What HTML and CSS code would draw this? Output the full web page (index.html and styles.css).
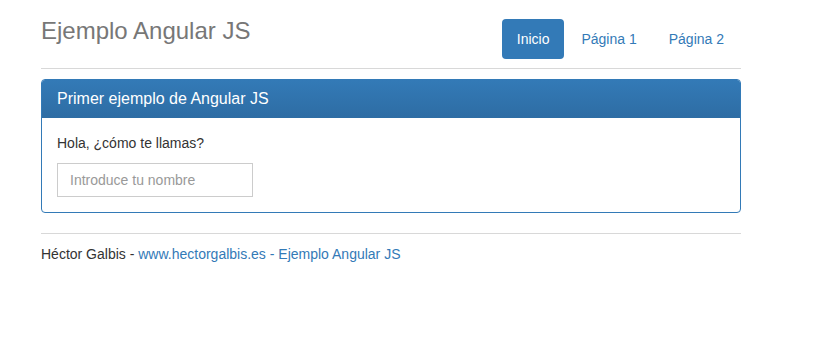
FILE: index.html
```html
<!DOCTYPE html>
<html lang="es">
  <head>
    <meta charset="UTF-8" />
    <meta name="viewport" content="width=device-width, initial-scale=1.0" />
    <title>Ejemplo Angular JS</title>
    <link rel="stylesheet" href="styles.css">
  </head>
  <body>
    <div class="container">
      <!-- Cabecera -->
      <div class="header">
        <h3 class="title">Ejemplo Angular JS</h3>
        <ul class="nav-pills">
          <li class="active"><a href="#">Inicio</a></li>
          <li><a href="#">Página 1</a></li>
          <li><a href="#">Página 2</a></li>
        </ul>
      </div>

      <!-- Panel principal -->
      <div class="panel">
        <div class="panel-heading">Primer ejemplo de Angular JS</div>
        <div class="panel-body">
          <p>Hola, ¿cómo te llamas?</p>
          <input type="text" class="name-input" placeholder="Introduce tu nombre" />
        </div>
      </div>

      <!-- Pie -->
      <div class="footer">
        Héctor Galbis - <a href="#">www.hectorgalbis.es - Ejemplo Angular JS</a>
      </div>
    </div>
  </body>
</html>
```

FILE: styles.css
```css
body {
  font-family: "Liberation Sans", Arial, sans-serif;
  font-size: 14px;
  line-height: 20px;
  color: #333;
  margin: 0;
  padding: 0;
  background: #fff;
}
a {
  color: #337ab7;
  text-decoration: none;
}
.container {
  width: 700px;
  margin-left: 41px;
}
.header {
  display: flex;
  justify-content: space-between;
  align-items: flex-start;
  padding-top: 18px;
  padding-bottom: 9px;
  border-bottom: 1px solid #d8d8d8;
}
.title {
  margin: 0;
  font-size: 24px;
  font-weight: normal;
  line-height: 26px;
  color: #777;
}
.nav-pills {
  list-style: none;
  margin: 1px 2px 0 0;
  padding: 0;
  display: flex;
}
.nav-pills li {
  margin-left: 2px;
}
.nav-pills a {
  display: block;
  padding: 10px 15px;
  border-radius: 4px;
}
.nav-pills .active a {
  background: #337ab7;
  color: #fff;
}
.panel {
  margin-top: 10px;
  margin-bottom: 20px;
  border: 1px solid #337ab7;
  border-radius: 4px;
}
.panel-heading {
  padding: 10px 15px;
  font-size: 16px;
  line-height: 17px;
  color: #fff;
  background: linear-gradient(to bottom, #337ab7, #2e6da4);
  border-bottom: 1px solid #2e6da4;
  border-radius: 3px 3px 0 0;
}
.panel-body {
  padding: 15px;
}
.panel-body p {
  margin: 0 0 10px;
}
.name-input {
  display: block;
  box-sizing: border-box;
  width: 196px;
  height: 34px;
  padding: 6px 12px;
  font-family: inherit;
  font-size: 14px;
  color: #555;
  border: 1px solid #ccc;
  border-radius: 0;
  outline: none;
}
.name-input::placeholder {
  color: #999;
}
.footer {
  border-top: 1px solid #d8d8d8;
  padding-top: 10px;
}
```
